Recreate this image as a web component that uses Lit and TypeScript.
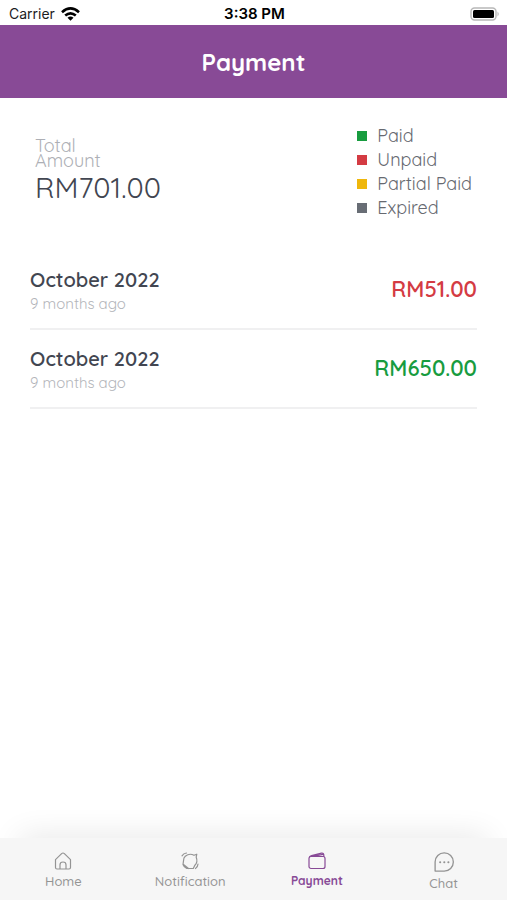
import { LitElement, html, css, svg } from "lit";
import { customElement, property } from "lit/decorators.js";
import { classMap } from "lit/directives/class-map.js";

type Status = "paid" | "unpaid" | "partial" | "expired";

const LEGEND: { status: Status; label: string }[] = [
  { status: "paid", label: "Paid" },
  { status: "unpaid", label: "Unpaid" },
  { status: "partial", label: "Partial Paid" },
  { status: "expired", label: "Expired" },
];

const PAYMENTS: { month: string; age: string; amount: string; status: Status }[] = [
  { month: "October 2022", age: "9 months ago", amount: "RM51.00", status: "unpaid" },
  { month: "October 2022", age: "9 months ago", amount: "RM650.00", status: "paid" },
];

const ICONS = {
  home: svg`<path d="M1.500 7.600 7.600 1.600Q9 .4 10.400 1.600L16.500 7.600V15.500Q16.500 17 15 17H3Q1.500 17 1.500 15.500ZM6 17V12.800Q6 10 9 10T12 12.800V17"/>`,
  notification: svg`<path d="M4.300 4.300Q8.500 .8 13 3.300L15.800 2.200 15.200 5.200Q17.200 10 13.700 13.500L12.300 16.500H5.800Q2.500 14.500 2 12.600L2.600 8.200Q2.500 5.800 4.300 4.300ZM1 3.800Q2.500 1.500 5.500 1M2.500 12.500 7.500 16.500M14.500 16.500Q16.800 15 17 12"/>`,
  payment: svg`<rect x="1" y="4.500" width="16" height="12" rx="2"/><path d="M1.500 5Q2 4 3.500 3.600L13.500 1.200Q15.500 .9 15.800 2.600V4.500M5 4.300 15 2.400"/>`,
  chat: svg`<path d="M1 17.200V9A8.200 8.200 0 1 1 9.200 17.200Z"/><path class="dots" d="M5.500 9.200h.1M9.200 9.200h.1M12.900 9.200h.1"/>`,
};

const TABS: { id: keyof typeof ICONS; label: string }[] = [
  { id: "home", label: "Home" },
  { id: "notification", label: "Notification" },
  { id: "payment", label: "Payment" },
  { id: "chat", label: "Chat" },
];

@customElement("status-bar")
class StatusBar extends LitElement {
  static styles = css`
    :host {
      display: grid;
      grid-template-columns: 1fr auto 1fr;
      align-items: center;
      height: 25px;
      padding: 2px 7px 0 9px;
      box-sizing: border-box;
      font: 14px/20px Inter, "Liberation Sans", sans-serif;
      color: #1c1c1e;
    }
    .carrier { display: flex; align-items: center; gap: 6px; }
    .time { font-size: 15px; font-weight: 600; color: #000; }
    .battery { justify-self: end; }
    svg { display: block; }
  `;

  render() {
    return html`
      <div class="carrier">
        <span>Carrier</span>
        <svg width="19" height="14" viewBox="0 0 19 14" aria-hidden="true">
          <g fill="none" stroke="#000" stroke-width="2.600">
            <path d="M1 5.200Q9.500 -2.400 18 5.200" />
            <path d="M4.200 8.600Q9.500 4 14.800 8.600" />
          </g>
          <path d="M6.500 10.800Q9.500 8.400 12.500 10.800L9.500 13.800Z" />
        </svg>
      </div>
      <span class="time">3:38 PM</span>
      <svg class="battery" width="30" height="14" viewBox="0 0 30 14" aria-hidden="true">
        <rect x="1" y="1" width="25" height="12" rx="3.500" fill="#fff" stroke="#b8b8b8" stroke-width="1.400" />
        <rect x="3" y="3" width="21" height="8" rx="1.500" />
        <path d="M27.500 4.500Q30 7 27.500 9.500Z" fill="#b8b8b8" />
      </svg>
    `;
  }
}

@customElement("tab-bar")
class TabBar extends LitElement {
  @property() active = "payment";

  static styles = css`
    :host {
      display: block;
      background: #f6f6f6;
      box-shadow: 0 -20px 32px -20px rgba(0, 0, 0, 0.12);
    }
    nav { display: grid; grid-template-columns: repeat(4, 1fr); height: 62px; }
    a {
      display: flex;
      flex-direction: column;
      align-items: center;
      gap: 3px;
      padding-top: 14px;
      font-size: 13px;
      line-height: 16px;
      font-weight: 500;
      color: #949494;
      text-decoration: none;
    }
    .active { color: #884a96; font-size: 12px; font-weight: 700; }
    svg {
      display: block;
      width: 18px;
      height: 18px;
      fill: none;
      stroke: currentColor;
      stroke-width: 1.200;
      stroke-linecap: round;
      stroke-linejoin: round;
    }
    .chat { width: 20px; height: 20px; }
    .dots { stroke-width: 1.800; }
  `;

  render() {
    return html`<nav>
      ${TABS.map(
        (t) => html`<a href="#${t.id}" class=${classMap({ active: t.id === this.active })}>
          <svg class=${t.id} viewBox="0 0 18 18" overflow="visible" aria-hidden="true">${ICONS[t.id]}</svg>
          <span>${t.label}</span>
        </a>`
      )}
    </nav>`;
  }
}

@customElement("app-root")
class AppRoot extends LitElement {
  static styles = css`
    :host {
      display: flex;
      flex-direction: column;
      min-height: 100vh;
      background: #fff;
      font-family: Quicksand, Lato, sans-serif;
      color: #424651;
    }
    header { background: #884a96; padding: 21px 0 20px; text-align: center; }
    h1 { margin: 0; font-size: 24px; line-height: 32px; font-weight: 700; color: #fff; }
    main { flex: 1; }
    .summary {
      display: flex;
      justify-content: space-between;
      align-items: flex-start;
      padding: 26px 35px 31px;
    }
    .total { padding-top: 14px; }
    .caption { width: 80px; font-size: 18px; line-height: 15px; color: #adafb5; font-weight: 400; }
    .sum { font-size: 29px; line-height: 36px; font-weight: 400; margin-top: 1px; }
    ul { margin: 0; padding: 0; list-style: none; }
    .legend li {
      display: flex;
      align-items: center;
      gap: 10px;
      font-size: 18px;
      line-height: 24px;
      color: #666970;
    }
    .swatch { width: 10px; height: 10px; background: currentColor; }
    .paid { color: #189c3f; }
    .unpaid { color: #d43b43; }
    .partial { color: #efb70c; }
    .expired { color: #686d75; }
    .list { padding: 0 30px; }
    .list li {
      display: flex;
      justify-content: space-between;
      align-items: center;
      padding: 15px 0 11px;
      border-bottom: 2px solid #f0f0f1;
    }
    .month { font-size: 20px; line-height: 28px; font-weight: 600; }
    .age { font-size: 15px; line-height: 20px; color: #b3b5ba; padding-bottom: 3px; }
    .amount { font-size: 22px; line-height: 28px; font-weight: 600; padding-bottom: 6px; }
  `;

  render() {
    return html`
      <status-bar></status-bar>
      <header><h1>Payment</h1></header>
      <main>
        <section class="summary">
          <div class="total">
            <div class="caption">Total Amount</div>
            <div class="sum">RM701.00</div>
          </div>
          <ul class="legend">
            ${LEGEND.map((l) => html`<li><span class="swatch ${l.status}"></span>${l.label}</li>`)}
          </ul>
        </section>
        <ul class="list">
          ${PAYMENTS.map(
            (p) => html`<li>
              <div>
                <div class="month">${p.month}</div>
                <div class="age">${p.age}</div>
              </div>
              <div class="amount ${p.status}">${p.amount}</div>
            </li>`
          )}
        </ul>
      </main>
      <tab-bar></tab-bar>
    `;
  }
}
